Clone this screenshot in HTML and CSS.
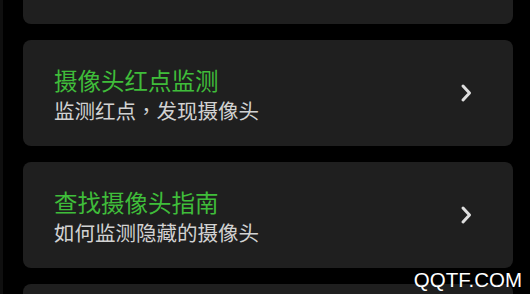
FILE: index.html
```html
<!DOCTYPE html>
<html lang="zh-CN">
<head>
    <meta charset="UTF-8">
    <meta name="viewport" content="width=device-width, initial-scale=1.0">
    <title>摄像头检测</title>
    <link rel="stylesheet" href="styles.css">
</head>
<body>

    <div class="screen">
        <div class="list">
            <!-- card scrolled mostly out of view -->
            <div class="card"></div>

            <div class="card">
                <div class="text">
                    <div class="title">摄像头红点监测</div>
                    <div class="desc" lang="zh-TW">监测红点，发现摄像头</div>
                </div>
                <svg class="arrow" viewBox="0 0 12 20" width="12" height="20">
                    <polyline points="3,3 9.5,10 3,17" />
                </svg>
            </div>

            <div class="card">
                <div class="text">
                    <div class="title">查找摄像头指南</div>
                    <div class="desc" lang="zh-TW">如何监测隐藏的摄像头</div>
                </div>
                <svg class="arrow" viewBox="0 0 12 20" width="12" height="20">
                    <polyline points="3,3 9.5,10 3,17" />
                </svg>
            </div>

            <div class="card"></div>
        </div>

        <div class="watermark">QQTF.COM</div>
    </div>

</body>
</html>
```

FILE: styles.css
```css
html, body {
    margin: 0;
    overflow: hidden;
}

body {
    background: #000;
    font-family: "Noto Sans CJK SC", "Noto Sans", sans-serif;
}

.screen {
    position: relative;
    height: 294px;
    overflow: hidden;
    border-left: 3px solid #0f0f0f;
}

.list {
    display: flex;
    flex-direction: column;
    gap: 16px;
    width: 490px;
    margin: -82px 0 0 20px;
}

.card {
    background: #1f1f1f;
    border-radius: 8px;
    min-height: 106px;
    box-sizing: border-box;
    display: flex;
    align-items: center;
    padding: 4px 41px 0 31px;
}

.text {
    flex: 1;
}

.title {
    color: #3fbd3a;
    font-size: 23.5px;
    line-height: 30px;
}

.desc {
    color: #d2d2d2;
    font-family: "Noto Sans CJK TC", "Noto Sans CJK SC", sans-serif;
    font-size: 20.5px;
    line-height: 30px;
}

.arrow {
    margin-top: -4px;
}

.arrow polyline {
    fill: none;
    stroke: #dedede;
    stroke-width: 3;
    stroke-linecap: round;
    stroke-linejoin: round;
}

.watermark {
    position: absolute;
    right: 8px;
    bottom: 2px;
    color: #fff;
    font-family: "Liberation Sans", Arial, sans-serif;
    font-size: 20.5px;
    line-height: 24px;
}
```
